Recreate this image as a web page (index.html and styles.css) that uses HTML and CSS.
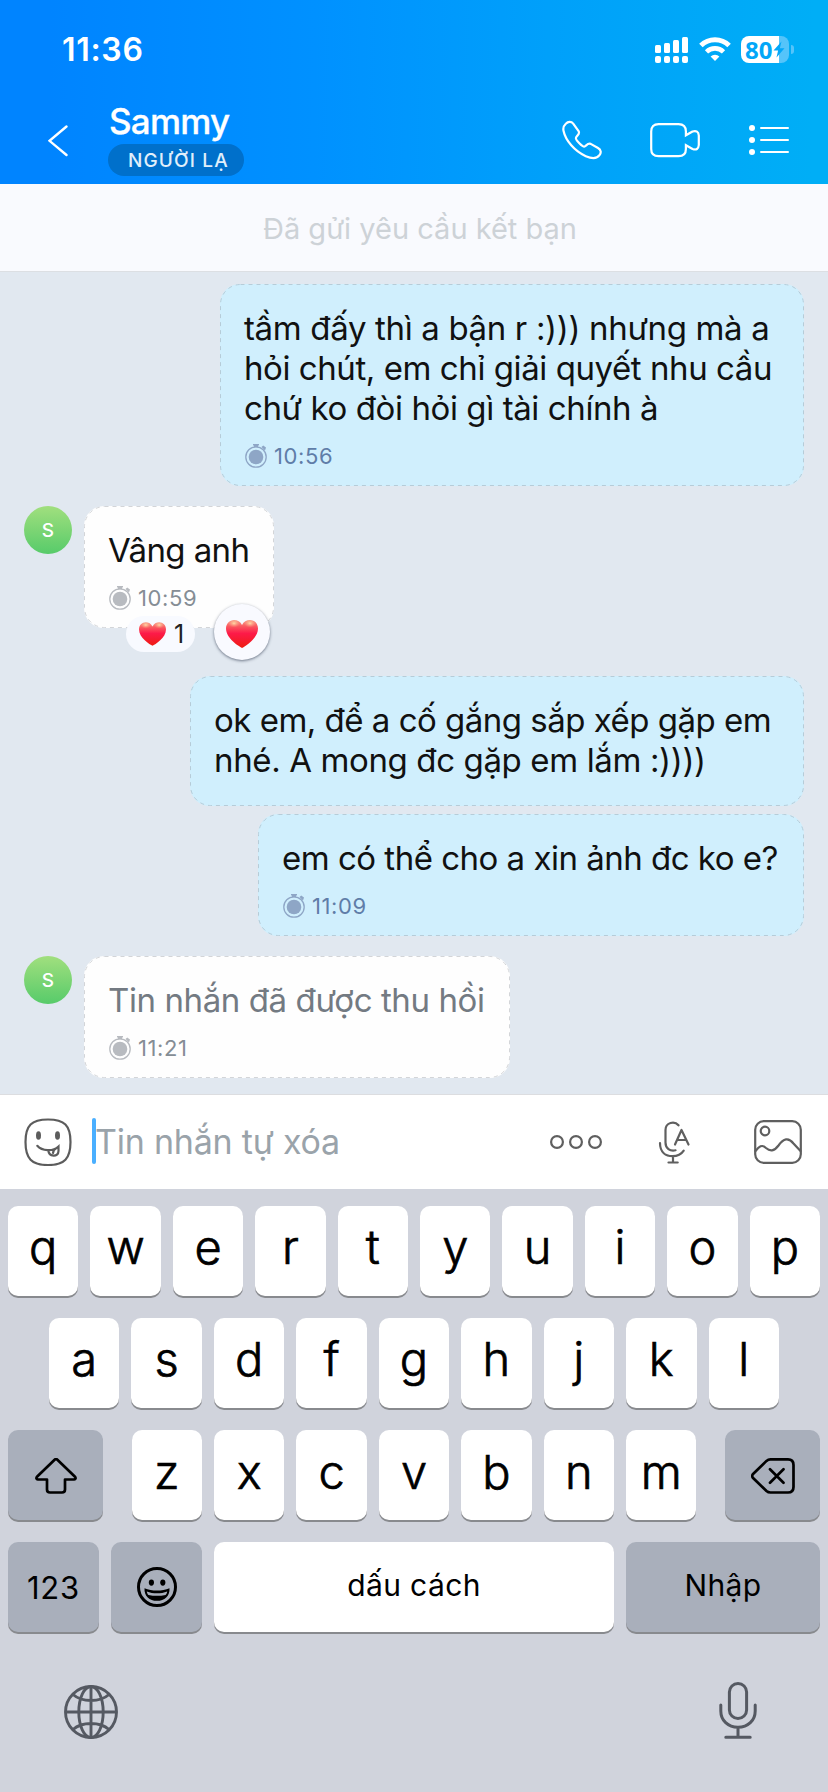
FILE: index.html
```html
<!DOCTYPE html>
<html lang="vi">
<head>
<meta charset="utf-8">
<title>Sammy</title>
<link rel="stylesheet" href="styles.css">
</head>
<body>
<svg class="defs" width="0" height="0">
  <defs>
    <linearGradient id="heartFill" x1="0" y1="0" x2="0" y2="1">
      <stop offset="0" stop-color="#f8a48c"/><stop offset=".22" stop-color="#fa5a60"/><stop offset=".48" stop-color="#fd1a49"/><stop offset="1" stop-color="#ee1c10"/>
    </linearGradient>
    <radialGradient id="heartShine" cx=".5" cy=".3" r=".5">
      <stop offset="0" stop-color="#ffe0a8" stop-opacity=".95"/><stop offset="1" stop-color="#ff9a80" stop-opacity="0"/>
    </radialGradient>
    <symbol id="heart" viewBox="0 0 32 28">
      <path d="M16 28C13 26.400 0 18.500 0 8.600 0 3.600 3.500 0 8 0c3.500 0 6.500 1.800 8 5 1.500-3.200 4.500-5 8-5 4.500 0 8 3.600 8 8.600C32 18.500 19 26.400 16 28Z" fill="url(#heartFill)"/>
      <ellipse cx="8" cy="5" rx="6" ry="4.300" fill="url(#heartShine)"/>
      <ellipse cx="24" cy="5" rx="6" ry="4.300" fill="url(#heartShine)"/>
    </symbol>
    <symbol id="timer" viewBox="0 0 22 24">
      <circle cx="11" cy="13" r="10.200" fill="none" stroke="currentColor" stroke-width="1.300"/>
      <circle cx="11" cy="13" r="7.300" fill="currentColor"/>
      <path d="M8 0h6v1.500h-1v1.700H9V1.500H8zM16.500 3l1.700-1.500 2.800 2-1 3z" fill="currentColor"/>
    </symbol>
  </defs>
</svg>

<header class="header">
  <div class="status">
    <span class="clock">11:36</span>
    <svg class="signal" width="33" height="26" viewBox="0 0 33 26" fill="#fff">
      <rect x="0" y="8" width="6" height="8" rx="1.500"/><rect x="9" y="6" width="6" height="10" rx="1.500"/><rect x="18" y="3" width="6" height="13" rx="1.500"/><rect x="27" y="0" width="6" height="16" rx="1.500"/>
      <rect x="0" y="19" width="6" height="7" rx="2"/><rect x="9" y="19" width="6" height="7" rx="2"/><rect x="18" y="19" width="6" height="7" rx="2"/><rect x="27" y="19" width="6" height="7" rx="2"/>
    </svg>
    <svg class="wifi" width="32" height="24" viewBox="0 0 32 24">
      <path d="M1.900 8.600a20 20 0 0 1 28.200 0" fill="none" stroke="#fff" stroke-width="5"/>
      <path d="M7.500 14.800a12.200 12.200 0 0 1 17 0" fill="none" stroke="#fff" stroke-width="4.600"/>
      <path d="M16 24l-4.400-4.600a6.500 6.500 0 0 1 8.800 0z" fill="#fff"/>
    </svg>
    <div class="battery">
      <span class="battery-level">80</span>
      <svg class="bolt" width="12" height="17" viewBox="0 0 12 17"><path d="M8.500 0.500L0.500 9.600h4.600L3.500 16.500L11.500 7.200H6.800z" fill="#02a7f8"/></svg>
    </div>
    <i class="battery-cap"></i>
  </div>
  <div class="titlebar">
    <svg class="back" width="20" height="32" viewBox="0 0 20 32"><path d="M18.500 1.500L1.500 15.800L18.500 30" fill="none" stroke="#fff" stroke-width="2.400" stroke-linecap="round"/></svg>
    <div class="who">
      <div class="name">Sammy</div>
      <div class="badge">NGƯỜI LẠ</div>
    </div>
    <svg class="phone" width="40" height="40" viewBox="0 0 40 40"><path d="M3.800 3.700C6 1.500 9.300 1.200 11.200 3.600L16.600 11.200C18.600 14 13.700 16.300 13.900 18.200C14 20.300 20.200 26.600 22.300 26.600C24 26.600 25.300 22.700 28.700 23.900L36 28C39.200 29.900 39.400 32.600 37.500 35.200C34.500 39.300 29.300 38.600 23.800 36.200C12.600 31.200 3.600 20.700 1.500 10.800C1 8.200 1.700 5.600 3.800 3.700Z" fill="none" stroke="#fff" stroke-width="2.200" stroke-linejoin="round"/></svg>
    <svg class="video" width="50" height="36" viewBox="0 0 50 36" fill="none" stroke="#fff" stroke-width="2.200"><path d="M42.500 9.500L35.900 13.300V9.500Q35.900 2.100 28.500 2.100H8.600Q1.200 2.100 1.200 9.500V27Q1.200 34.200 8.600 34.200H28.500Q35.900 34.200 35.900 27V23.200L42.500 27Q48.300 29 48.800 23V13.500Q48.300 7.800 42.500 9.500Z"/></svg>
    <svg class="menu" width="40" height="32" viewBox="0 0 40 32" fill="#fff"><circle cx="3" cy="4" r="3"/><circle cx="3" cy="16" r="3"/><circle cx="3" cy="28" r="3"/><rect x="11" y="2.900" width="29" height="2.200" rx="1"/><rect x="11" y="14.900" width="29" height="2.200" rx="1"/><rect x="11" y="26.900" width="29" height="2.200" rx="1"/></svg>
  </div>
</header>

<div class="notice">Đã gửi yêu cầu kết bạn</div>

<main class="chat">
  <section class="row mine">
    <div class="bubble b1">
      <svg class="outline"><rect x=".5" y=".5" rx="20"/></svg>
      <p><span class="l1">tầm đấy thì a bận r :))) nhưng mà a</span><br><span class="l2">hỏi chút, em chỉ giải quyết nhu cầu</span><br><span class="l3">chứ ko đòi hỏi gì tài chính à</span></p>
      <div class="time"><svg width="22" height="24"><use href="#timer"/></svg><span>10:56</span></div>
    </div>
  </section>
  <section class="row theirs">
    <div class="avatar">S</div>
    <div class="bubble b2">
      <svg class="outline"><rect x=".5" y=".5" rx="20"/></svg>
      <p><span class="l4">Vâng anh</span></p>
      <div class="time"><svg width="22" height="24"><use href="#timer"/></svg><span>10:59</span></div>
      <div class="reaction"><svg width="27" height="24"><use href="#heart"/></svg><span>1</span></div>
      <div class="react"><svg width="32" height="28"><use href="#heart"/></svg></div>
    </div>
  </section>
  <section class="row mine far">
    <div class="bubble b3">
      <svg class="outline"><rect x=".5" y=".5" rx="20"/></svg>
      <p><span class="l5">ok em, để a cố gắng sắp xếp gặp em</span><br><span class="l6">nhé. A mong đc gặp em lắm :))))</span></p>
    </div>
  </section>
  <section class="row mine near">
    <div class="bubble b4">
      <svg class="outline"><rect x=".5" y=".5" rx="20"/></svg>
      <p><span class="l7">em có thể cho a xin ảnh đc ko e?</span></p>
      <div class="time"><svg width="22" height="24"><use href="#timer"/></svg><span>11:09</span></div>
    </div>
  </section>
  <section class="row theirs">
    <div class="avatar">S</div>
    <div class="bubble b5">
      <svg class="outline"><rect x=".5" y=".5" rx="20"/></svg>
      <p class="recalled"><span class="l8">Tin nhắn đã được thu hồi</span></p>
      <div class="time"><svg width="22" height="24"><use href="#timer"/></svg><span>11:21</span></div>
    </div>
  </section>
</main>

<div class="composer">
  <svg class="smiley" width="48" height="48" viewBox="0 0 48 48" fill="none" stroke="#5c5c5c" stroke-width="2.200" stroke-linecap="round">
    <path d="M24 1.500C40.500 1.500 46.500 7.500 46.500 24S40.500 47 24 47S1.500 40.500 1.500 24S7.500 1.500 24 1.500Z"/>
    <ellipse cx="14.500" cy="17.500" rx="2.500" ry="4.300" fill="#5c5c5c" stroke="none"/><ellipse cx="33.500" cy="17.500" rx="2.500" ry="4.300" fill="#5c5c5c" stroke="none"/>
    <path d="M13.300 27.800C18 33.200 29 33.800 34.500 28.500V33C34.500 39.500 24.800 39.200 24.300 32.200M29 35Q29.500 31.500 32 30.500"/>
  </svg>
  <i class="caret"></i>
  <span class="placeholder">Tin nhắn tự xóa</span>
  <svg class="dots" width="52" height="14" viewBox="0 0 52 14" fill="none" stroke="#5f5f5f" stroke-width="2.200"><circle cx="7" cy="7" r="5.900"/><circle cx="26" cy="7" r="5.900"/><circle cx="45" cy="7" r="5.900"/></svg>
  <svg class="voice" width="32" height="44" viewBox="0 0 32 44" fill="none" stroke="#5f5f5f" stroke-width="2.200" stroke-linecap="round" stroke-linejoin="round">
    <path d="M20.500 4.300C16.500-.500 7.500 1.300 7.500 9V21.500C7.500 27.500 12 30.500 17.500 29.300M2 22C2 31.500 8 35.200 14.500 35.200C19.500 35.200 23.500 33 25.700 29.600M15 35.500V41M10.500 41.500H19.700"/>
    <path d="M17 23.500L23.500 9L30.500 23.500M19.500 19H28"/>
  </svg>
  <svg class="image" width="48" height="44" viewBox="0 0 48 44" fill="none" stroke="#5f5f5f" stroke-width="2.200" stroke-linecap="round"><rect x="1.200" y="1.200" width="45.600" height="41.600" rx="8.500"/><circle cx="11" cy="11" r="4.300"/><path d="M1.500 31C5 26.500 8 24 12 28C16 31.500 20 31.500 24.500 25.500C29.500 18.500 34.500 17 39.500 23.500L46.500 31"/></svg>
</div>

<div class="keyboard">
  <div class="keys"><b>q</b><b>w</b><b>e</b><b>r</b><b>t</b><b>y</b><b>u</b><b>i</b><b>o</b><b>p</b></div>
  <div class="keys second"><b>a</b><b>s</b><b>d</b><b>f</b><b>g</b><b>h</b><b>j</b><b>k</b><b>l</b></div>
  <div class="keys third">
    <div class="fn wide"><svg width="42" height="36" viewBox="0 0 42 36"><path d="M19.600 1.800Q21 .500 22.400 1.800L40 18.800Q41.500 20.900 39 21.500H30V31.500Q30 34.500 27 34.500H15Q12 34.500 12 31.500V21.500H3Q.500 20.900 2 18.800Z" fill="none" stroke="#000" stroke-width="2.700" stroke-linejoin="round"/></svg></div>
    <div class="letters"><b>z</b><b>x</b><b>c</b><b>v</b><b>b</b><b>n</b><b>m</b></div>
    <div class="fn wide"><svg width="44" height="36" viewBox="0 0 44 36" fill="none" stroke="#000" stroke-width="2.700" stroke-linejoin="round" stroke-linecap="round"><path d="M19.500 1.400H37Q42.500 1.400 42.500 7V29Q42.500 34.500 37 34.500H19.500Q17.200 34.500 15.500 33L1.800 19.700Q.600 18 1.800 16.300L15.500 2.900Q17.200 1.400 19.500 1.400ZM19 11.300L32.500 24.800M32.500 11.300L19 24.800"/></svg></div>
  </div>
  <div class="keys fourth">
    <div class="fn num">123</div>
    <div class="fn"><svg width="40" height="40" viewBox="0 0 40 40"><circle cx="20" cy="20" r="18.500" fill="none" stroke="#000" stroke-width="3"/><ellipse cx="14.400" cy="15.600" rx="2.600" ry="3.100" /><ellipse cx="25.800" cy="15.600" rx="2.600" ry="3.100"/><path d="M7.500 21.200C15 24.300 25 24.300 32.500 21.200C33 29 27.500 33.800 20 33.800S7 29 7.500 21.200Z"/><path d="M9.800 24.400C16 26.900 24 26.900 30.200 24.400C30 26.300 29.200 27.200 28.500 27.900C23 29.100 17 29.100 11.500 27.900C10.600 27.200 10 26 9.800 24.400Z" fill="#a9afbb"/></svg></div>
    <div class="space">dấu cách</div>
    <div class="fn enter">Nhập</div>
  </div>
  <div class="bottom">
    <svg class="globe" width="54" height="54" viewBox="0 0 54 54" fill="none" stroke="#555962" stroke-width="2.900"><circle cx="27" cy="27" r="25.500"/><ellipse cx="27" cy="27" rx="12.200" ry="25.500"/><path d="M27 1.500V52.500M1.500 27H52.500M9 9.500C18 17.500 36 17.500 45 9.500M9 44.500C18 36.500 36 36.500 45 44.500"/></svg>
    <svg width="38" height="58" viewBox="0 0 38 58" fill="none" stroke="#555962" stroke-width="3" stroke-linecap="round"><rect x="10.400" y="1.500" width="17.200" height="35" rx="8.600"/><path d="M1.800 23V29C1.800 38.500 9 45.300 19 45.300S36.200 38.500 36.200 29V23M19 45.500V55M6.800 55.300H31.200"/></svg>
  </div>
</div>
</body>
</html>
```

FILE: styles.css
```css
* { box-sizing: border-box; }
body { margin: 0; width: 828px; height: 1792px; overflow: hidden; background: #d0d3dc; font-family: Inter, "Noto Sans", sans-serif; color: #111; display: flex; flex-direction: column; }
svg { display: block; flex: none; }
.defs { position: absolute; }
p { margin: 0; }

.header { height: 184px; background: linear-gradient(91deg, #0084ff 6%, #0091ff 38%, #00a0fa 66%, #00aef6 98%); color: #fff; }
.status { height: 100px; display: flex; padding: 36px 34px 0 62px; align-items: flex-start; }
.clock { font-size: 32px; font-weight: 600; line-height: 28px; letter-spacing: 0.7px; flex: 1; }
.signal { margin: 1px 11px 0 0; }
.wifi { margin: 1px 10px 0 0; }
.battery { width: 48px; height: 27px; border-radius: 8px; background: linear-gradient(90deg, #fff 38px, #55c4fa 38px); display: flex; align-items: center; padding-left: 4px; }
.battery-level { font-size: 24px; font-weight: 700; line-height: 27px; color: #02a7f8; font-family: "Noto Sans", sans-serif; }
.bolt { margin-left: 1px; }
.battery-cap { width: 3px; height: 9px; margin: 9px 0 0 2px; border-radius: 0 4px 4px 0; background: #55c4fa; }
.titlebar { display: flex; padding: 0 39px 0 48px; align-items: flex-start; }
.back { margin-top: 25px; }
.who { margin-left: 40px; width: 200px; }
.name { font-size: 35px; font-weight: 500; line-height: 43px; letter-spacing: -0.8px; height: 44px; margin-left: 1px; -webkit-text-stroke: 0.3px #fff; }
.badge { width: 136px; height: 32px; border-radius: 16px; background: #0070cb; color: #e0effb; font-size: 19px; font-weight: 500; line-height: 34px; letter-spacing: 1.15px; padding-left: 20px; white-space: nowrap; }
.phone { margin: 20px 0 0 254px; }
.video { margin: 22px 0 0 48px; }
.menu { margin: 24px 0 0 49px; }

.notice { height: 88px; background: #f9fafe; border-bottom: 1px solid #dcdfe3; padding-left: 263px; font-size: 29px; line-height: 89px; color: #cdd2d7; white-space: nowrap; }

.chat { height: 822px; background: #e1e8f0; padding: 12px 24px 0; }
.row { display: flex; margin-bottom: 20px; }
.mine { justify-content: flex-end; }
.far { margin-top: 48px; margin-bottom: 8px; }
.theirs { align-items: flex-start; }
.avatar { width: 48px; height: 48px; border-radius: 50%; margin-right: 12px; background: linear-gradient(#a1df7e, #57cb6a); color: #fff; font-size: 19px; font-weight: 500; line-height: 49px; text-align: center; }
.bubble { position: relative; border-radius: 20px; background: #d0effd; padding: 24px 0 0 24px; font-size: 33px; line-height: 40px; white-space: nowrap; }
.outline { position: absolute; inset: 0; width: 100%; height: 100%; }
.outline rect { width: calc(100% - 1px); height: calc(100% - 1px); fill: none; stroke: #b6ccd8; stroke-dasharray: 4 4; }
.theirs .outline rect { stroke: #d3d5d8; }
.theirs .bubble { background: #fefefe; height: 122px; }
.b1 { width: 584px; height: 202px; }
.b2 { width: 190px; }
.b3 { width: 614px; height: 130px; }
.b4 { width: 546px; height: 122px; }
.b5 { width: 426px; }
.l1 { letter-spacing: -0.34px; }
.l2 { letter-spacing: -0.43px; }
.l3 { letter-spacing: -0.4px; }
.l4 { letter-spacing: -0.6px; }
.l5 { letter-spacing: -0.5px; }
.l6 { letter-spacing: -0.37px; }
.l7 { letter-spacing: -0.5px; }
.l8 { letter-spacing: -0.4px; }
.recalled { color: #737a82; }
.time { display: flex; gap: 7px; margin-top: 14px; font-size: 22px; line-height: 28px; letter-spacing: 0.6px; color: #5f7da8; }
.time svg { color: #8ea6c6; margin: 2px 0 0 1px; }
.theirs .time { color: #858d95; }
.theirs .time svg { color: #b8bbc0; }
.reaction { position: absolute; left: 42px; top: 110px; width: 69px; height: 36px; border-radius: 18px; background: #f8faff; display: flex; align-items: center; padding-left: 13px; gap: 8px; font-size: 25px; line-height: 36px; color: #222; }
.react { position: absolute; left: 130px; top: 98px; width: 56px; height: 56px; border-radius: 50%; background: #f9faff; box-shadow: 0 1px 3px rgba(60,70,90,.7); display: flex; align-items: center; justify-content: center; padding-top: 4px; }

.composer { height: 95px; background: #fff; border-top: 1px solid #dcdde0; display: flex; align-items: flex-start; padding-left: 24px; }
.smiley { margin-top: 23px; }
.caret { width: 4px; height: 46px; margin: 23px 0 0 20px; border-radius: 2px; background: #4aafff; }
.placeholder { width: 454px; margin-top: 27px; font-size: 34px; line-height: 40px; letter-spacing: -0.22px; text-indent: -1px; color: #9aa3aa; white-space: nowrap; }
.dots { margin: 40px 0 0 0; }
.voice { margin: 26px 0 0 56px; }
.image { margin: 25px 0 0 64px; }

.keyboard { flex: 1; padding: 17px 8px 0; background: #d0d3dc; }
.keys { display: flex; gap: 12px; height: 90px; margin-bottom: 22px; }
.second { padding: 0 41px; }
.keys b, .fn, .space { flex: 1 1 0; height: 90px; border-radius: 10px; background: #fff; box-shadow: 0 2px 0 #888a8e; color: #000; font-weight: 400; display: flex; align-items: center; justify-content: center; }
.keys b { font-size: 47px; line-height: 82px; align-items: flex-start; font-weight: 300; -webkit-text-stroke: 0.7px #000; }
.keys .fn { background: #a9afbb; }
.third { justify-content: space-between; }
.third b { line-height: 84px; }
.letters { display: flex; gap: 12px; width: 565px; }
.keys .wide { flex: none; width: 95px; padding-top: 2px; }
.fourth { display: grid; grid-template-columns: 91px 91px 400px 194px; }
.num { font-size: 31px; letter-spacing: 0.8px; }
.space, .enter { font-size: 30px; letter-spacing: 0.4px; }
.keys .space, .keys .enter { padding-bottom: 5px; }
.bottom { display: flex; justify-content: space-between; padding: 28px 63px 0 56px; }
.globe { margin-top: 3px; }
```
